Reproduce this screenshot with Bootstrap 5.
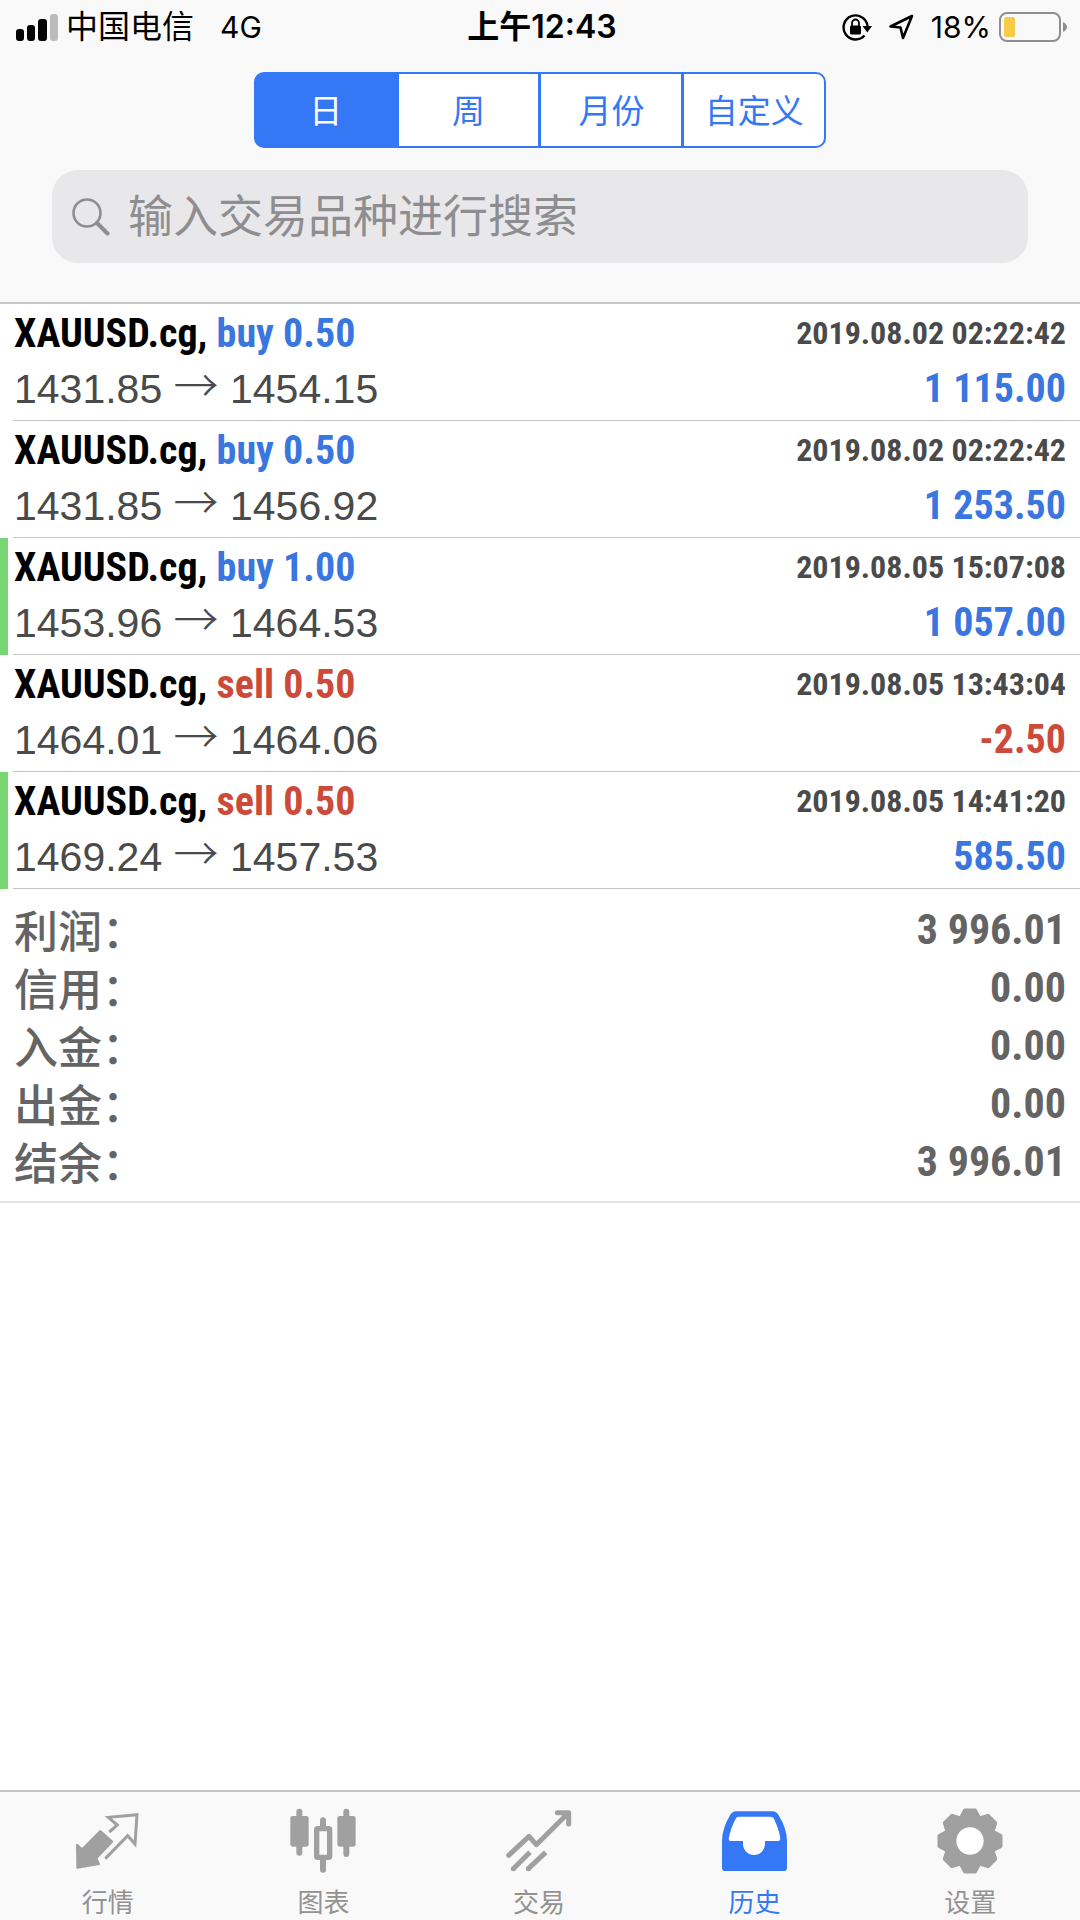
<!DOCTYPE html>
<html lang="zh-CN">
<head>
<meta charset="utf-8">
<meta name="viewport" content="width=device-width, initial-scale=1">
<title>历史</title>
<link href="https://cdn.jsdelivr.net/npm/bootstrap@5.3.0/dist/css/bootstrap.min.css" rel="stylesheet">
<style>
  :root { --app-blue: #3478f6; --deal-blue: #3a76e0; --deal-red: #cc4a3a; --bar-bg: #f9f9f9; }
  body { font-family: Inter, "Noto Sans CJK SC", sans-serif; color: #000; background: #fff; }
  .top-bar { background: var(--bar-bg); border-bottom: 2px solid #c8c8ca; padding-bottom: 39px; }
  .status-line { height: 54px; font-size: 30px; line-height: 54px; padding: 0 12px 0 16px; }
  .status-line > div { flex: 1 1 0; }
  .status-line svg { flex: none; }
  .carrier { font-size: 32px; margin: 0 26px 0 8px; }
  .clock { font-size: 32px; font-weight: 600; }
  .battery-level { margin: 0 8px 0 17px; }
  .periods { width: 53%; margin-top: 18px; }
  .periods .btn { flex: 1 1 0; height: 76px; padding: 0; font-size: 33px; line-height: 74px; border: 2px solid var(--app-blue); border-radius: 10px; color: var(--app-blue); background: #fff; }
  .periods .btn:not(:first-of-type) { margin-left: -2px; }
  .periods .btn-check:checked + .btn { background: var(--app-blue); border-color: var(--app-blue); color: #fff; }
  .finder { margin: 22px 52px 0; height: 93px; border-radius: 26px; background: #e8e8ea; padding: 0 20px; }
  .finder input { font-size: 45px; line-height: 60px; padding: 0 0 0 18px; color: #444; }
  .finder input:focus { outline: 0; }
  .finder input::placeholder { color: #8e8e91; opacity: 1; }
  .deal { height: 117px; padding: 2px 14px 0 6px; border-left: 8px solid transparent; position: relative; }
  .deal::after { content: ""; position: absolute; left: 5px; right: 0; bottom: 0; border-bottom: 1px solid #c4c4c6; }
  .deal.marked { border-left-color: #78d672; }
  .line { height: 55px; line-height: 55px; white-space: nowrap; }
  .narrow { font-family: "Roboto Condensed", "Liberation Sans", sans-serif; font-weight: 700; }
  .symbol, .side, .gain { font-size: 40px; }
  .stamp { font-size: 32px; color: #4a4a4a; }
  .prices { font-family: "Liberation Sans", sans-serif; font-size: 41px; color: #4a4a4a; }
  .arrow { font-family: "Noto Sans CJK SC", sans-serif; font-size: 45px; font-weight: 300; line-height: 1; }
  .up { color: var(--deal-blue); }
  .down { color: var(--deal-red); }
  .totals { padding: 12px 14px 10px; border-bottom: 2px solid #e2e2e2; color: #646464; line-height: 58px; }
  .totals > div { height: 58px; }
  .totals dt { font-family: "Noto Sans CJK SC", sans-serif; font-size: 44px; font-weight: 500; line-height: 56px; }
  .totals dd { font-size: 42px; }
  .tab-bar { background: var(--bar-bg); border-top: 2px solid #c2c4c5; padding: 16px 2px 0 0; }
  .tab-bar a { flex: 1 1 0; color: #929292; font-size: 26px; line-height: 34px; gap: 12px; }
  .tab-bar a.active { color: var(--app-blue); }
  .tab-bar svg { fill: #a0a0a0; stroke: #a0a0a0; stroke-width: 0; }
</style>
</head>
<body class="d-flex flex-column min-vh-100">

<header class="top-bar">
  <div class="status-line d-flex align-items-center">
    <div class="d-flex align-items-center">
      <svg width="42" height="27" viewBox="0 0 42 27" aria-hidden="true">
        <rect x="0" y="15" width="8" height="12" rx="3"/><rect x="11" y="11" width="8" height="16" rx="3"/>
        <rect x="22" y="5" width="9" height="22" rx="3"/><rect x="34" y="0" width="8" height="27" rx="3" fill="#bbb"/>
      </svg>
      <span class="carrier">中国电信</span><span>4G</span>
    </div>
    <span class="clock">上午12:43</span>
    <div class="d-flex align-items-center justify-content-end">
      <svg width="30" height="28" viewBox="0 0 30 28" aria-hidden="true">
        <path d="M22.5 22.5A12 12 0 1 1 25.500 13" fill="none" stroke="#000" stroke-width="2.400"/>
        <path d="M20.500 13H30L25.300 19.500Z"/>
        <rect x="8" y="12.500" width="11" height="9" rx="1.500"/>
        <path d="M10 13V10a3.500 3.500 0 0 1 7 0v3" fill="none" stroke="#000" stroke-width="1.800"/>
      </svg>
      <svg class="ms-3" width="26" height="26" viewBox="0 0 26 26" aria-hidden="true">
        <path d="M24 2L2.500 12.500L12.500 13.500L15 24Z" fill="none" stroke="#000" stroke-width="2.600" stroke-linejoin="round"/>
      </svg>
      <span class="battery-level">18%</span>
      <svg width="69" height="30" viewBox="0 0 69 30" aria-hidden="true">
        <rect x="1" y="1" width="60" height="28" rx="7" fill="none" stroke="#8e8e8e" stroke-width="2"/>
        <rect x="5" y="5" width="11" height="20" rx="2" fill="#f7cb46"/>
        <path d="M64 10q4 2 4 5t-4 5z" fill="#8e8e8e"/>
      </svg>
    </div>
  </div>

  <div class="periods btn-group d-flex mx-auto" role="group" aria-label="时间段">
    <input class="btn-check" type="radio" name="period" id="p-day" checked><label class="btn" for="p-day">日</label>
    <input class="btn-check" type="radio" name="period" id="p-week"><label class="btn" for="p-week">周</label>
    <input class="btn-check" type="radio" name="period" id="p-month"><label class="btn" for="p-month">月份</label>
    <input class="btn-check" type="radio" name="period" id="p-custom"><label class="btn" for="p-custom">自定义</label>
  </div>

  <div class="finder d-flex align-items-center">
    <label for="find" class="d-flex" aria-label="搜索">
      <svg width="38" height="38" viewBox="0 0 38 38" fill="none" stroke="#8e8e91">
        <circle cx="15" cy="15" r="13.500" stroke-width="2.600"/><path d="M25 25L35.500 35.500" stroke-width="4" stroke-linecap="round"/>
      </svg>
    </label>
    <input id="find" class="flex-grow-1 border-0 bg-transparent" type="text" placeholder="输入交易品种进行搜索">
  </div>
</header>

<main>
  <ul class="list-unstyled mb-0">
    <li class="deal">
      <div class="line d-flex justify-content-between"><span class="narrow"><span class="symbol">XAUUSD.cg, </span><span class="side up">buy 0.50</span></span><time class="narrow stamp">2019.08.02 02:22:42</time></div>
      <div class="line d-flex justify-content-between"><span class="prices">1431.85 <span class="arrow">→</span> 1454.15</span><span class="narrow gain up">1 115.00</span></div>
    </li>
    <li class="deal">
      <div class="line d-flex justify-content-between"><span class="narrow"><span class="symbol">XAUUSD.cg, </span><span class="side up">buy 0.50</span></span><time class="narrow stamp">2019.08.02 02:22:42</time></div>
      <div class="line d-flex justify-content-between"><span class="prices">1431.85 <span class="arrow">→</span> 1456.92</span><span class="narrow gain up">1 253.50</span></div>
    </li>
    <li class="deal marked">
      <div class="line d-flex justify-content-between"><span class="narrow"><span class="symbol">XAUUSD.cg, </span><span class="side up">buy 1.00</span></span><time class="narrow stamp">2019.08.05 15:07:08</time></div>
      <div class="line d-flex justify-content-between"><span class="prices">1453.96 <span class="arrow">→</span> 1464.53</span><span class="narrow gain up">1 057.00</span></div>
    </li>
    <li class="deal">
      <div class="line d-flex justify-content-between"><span class="narrow"><span class="symbol">XAUUSD.cg, </span><span class="side down">sell 0.50</span></span><time class="narrow stamp">2019.08.05 13:43:04</time></div>
      <div class="line d-flex justify-content-between"><span class="prices">1464.01 <span class="arrow">→</span> 1464.06</span><span class="narrow gain down">-2.50</span></div>
    </li>
    <li class="deal marked">
      <div class="line d-flex justify-content-between"><span class="narrow"><span class="symbol">XAUUSD.cg, </span><span class="side down">sell 0.50</span></span><time class="narrow stamp">2019.08.05 14:41:20</time></div>
      <div class="line d-flex justify-content-between"><span class="prices">1469.24 <span class="arrow">→</span> 1457.53</span><span class="narrow gain up">585.50</span></div>
    </li>
  </ul>

  <dl class="totals mb-0">
    <div class="d-flex justify-content-between"><dt>利润：</dt><dd class="narrow mb-0">3 996.01</dd></div>
    <div class="d-flex justify-content-between"><dt>信用：</dt><dd class="narrow mb-0">0.00</dd></div>
    <div class="d-flex justify-content-between"><dt>入金：</dt><dd class="narrow mb-0">0.00</dd></div>
    <div class="d-flex justify-content-between"><dt>出金：</dt><dd class="narrow mb-0">0.00</dd></div>
    <div class="d-flex justify-content-between"><dt>结余：</dt><dd class="narrow mb-0">3 996.01</dd></div>
  </dl>
</main>

<nav class="tab-bar d-flex mt-auto" aria-label="主导航">
  <a href="#quotes" class="d-flex flex-column align-items-center text-decoration-none">
    <svg width="66" height="66" viewBox="0 0 198 198" aria-hidden="true">
      <path d="M6 110L21 124L76 69L112 101L64 151L72 168L7 179Z" stroke-width="6" stroke-linejoin="round"/>
      <path d="M103 72L127 51L100 28L186 20L180 108L158 83L91 152" fill="none" stroke-width="9"/>
    </svg>行情</a>
  <a href="#charts" class="d-flex flex-column align-items-center text-decoration-none">
    <svg width="66" height="66" viewBox="0 0 198 198" aria-hidden="true">
      <rect x="1" y="24" width="55" height="92" rx="7"/><rect x="19" y="2" width="18" height="141" rx="9"/>
      <rect x="90" y="28" width="18" height="40" rx="9"/><rect x="90" y="146" width="18" height="48" rx="9"/>
      <rect x="80" y="62" width="39" height="86" rx="3" fill="none" stroke-width="16"/>
      <rect x="142" y="24" width="55" height="92" rx="7"/><rect x="160" y="2" width="18" height="145" rx="9"/>
    </svg>图表</a>
  <a href="#trade" class="d-flex flex-column align-items-center text-decoration-none">
    <svg width="66" height="66" viewBox="0 0 198 198" aria-hidden="true">
      <g fill="none" stroke-width="15" stroke-linecap="round" stroke-linejoin="round">
        <path d="M8 142L69 85L91 110L184 18M154 14H188V48"/>
        <path stroke-linecap="butt" d="M22 182L72 133M67 182L119 133"/>
        <path d="M22 182h.1M67 182h.1"/>
      </g>
    </svg>交易</a>
  <a href="#history" class="active d-flex flex-column align-items-center text-decoration-none" aria-current="page">
    <svg width="66" height="66" viewBox="0 0 198 198" aria-hidden="true">
      <path fill="#3478f6" d="M42 10H152Q163 10 170 22Q195 62 195 100V179Q195 189 185 189H10Q0 189 0 179V100Q0 62 24 22Q31 10 42 10Z"/>
      <path fill="#fff" d="M50 26H146Q152 26 155 31Q172 66 175 92Q175 99 168 99H129V108A33 33 0 0 1 63 108V99H26Q20 99 20 92Q26 60 42 31Q44 26 50 26Z"/>
    </svg>历史</a>
  <a href="#settings" class="d-flex flex-column align-items-center text-decoration-none">
    <svg width="66" height="66" viewBox="-99 -99 198 198" aria-hidden="true">
      <defs><path id="teeth" d="M-15 -91H15L30 -62V62L15 91H-15L-30 62V-62Z" stroke-width="13" stroke-linejoin="round"/></defs>
      <circle r="74"/>
      <use href="#teeth"/><use href="#teeth" transform="rotate(45)"/><use href="#teeth" transform="rotate(90)"/><use href="#teeth" transform="rotate(135)"/>
      <circle r="41" fill="#fff"/>
    </svg>设置</a>
</nav>

<script src="https://cdn.jsdelivr.net/npm/bootstrap@5.3.0/dist/js/bootstrap.bundle.min.js"></script>
</body>
</html>
